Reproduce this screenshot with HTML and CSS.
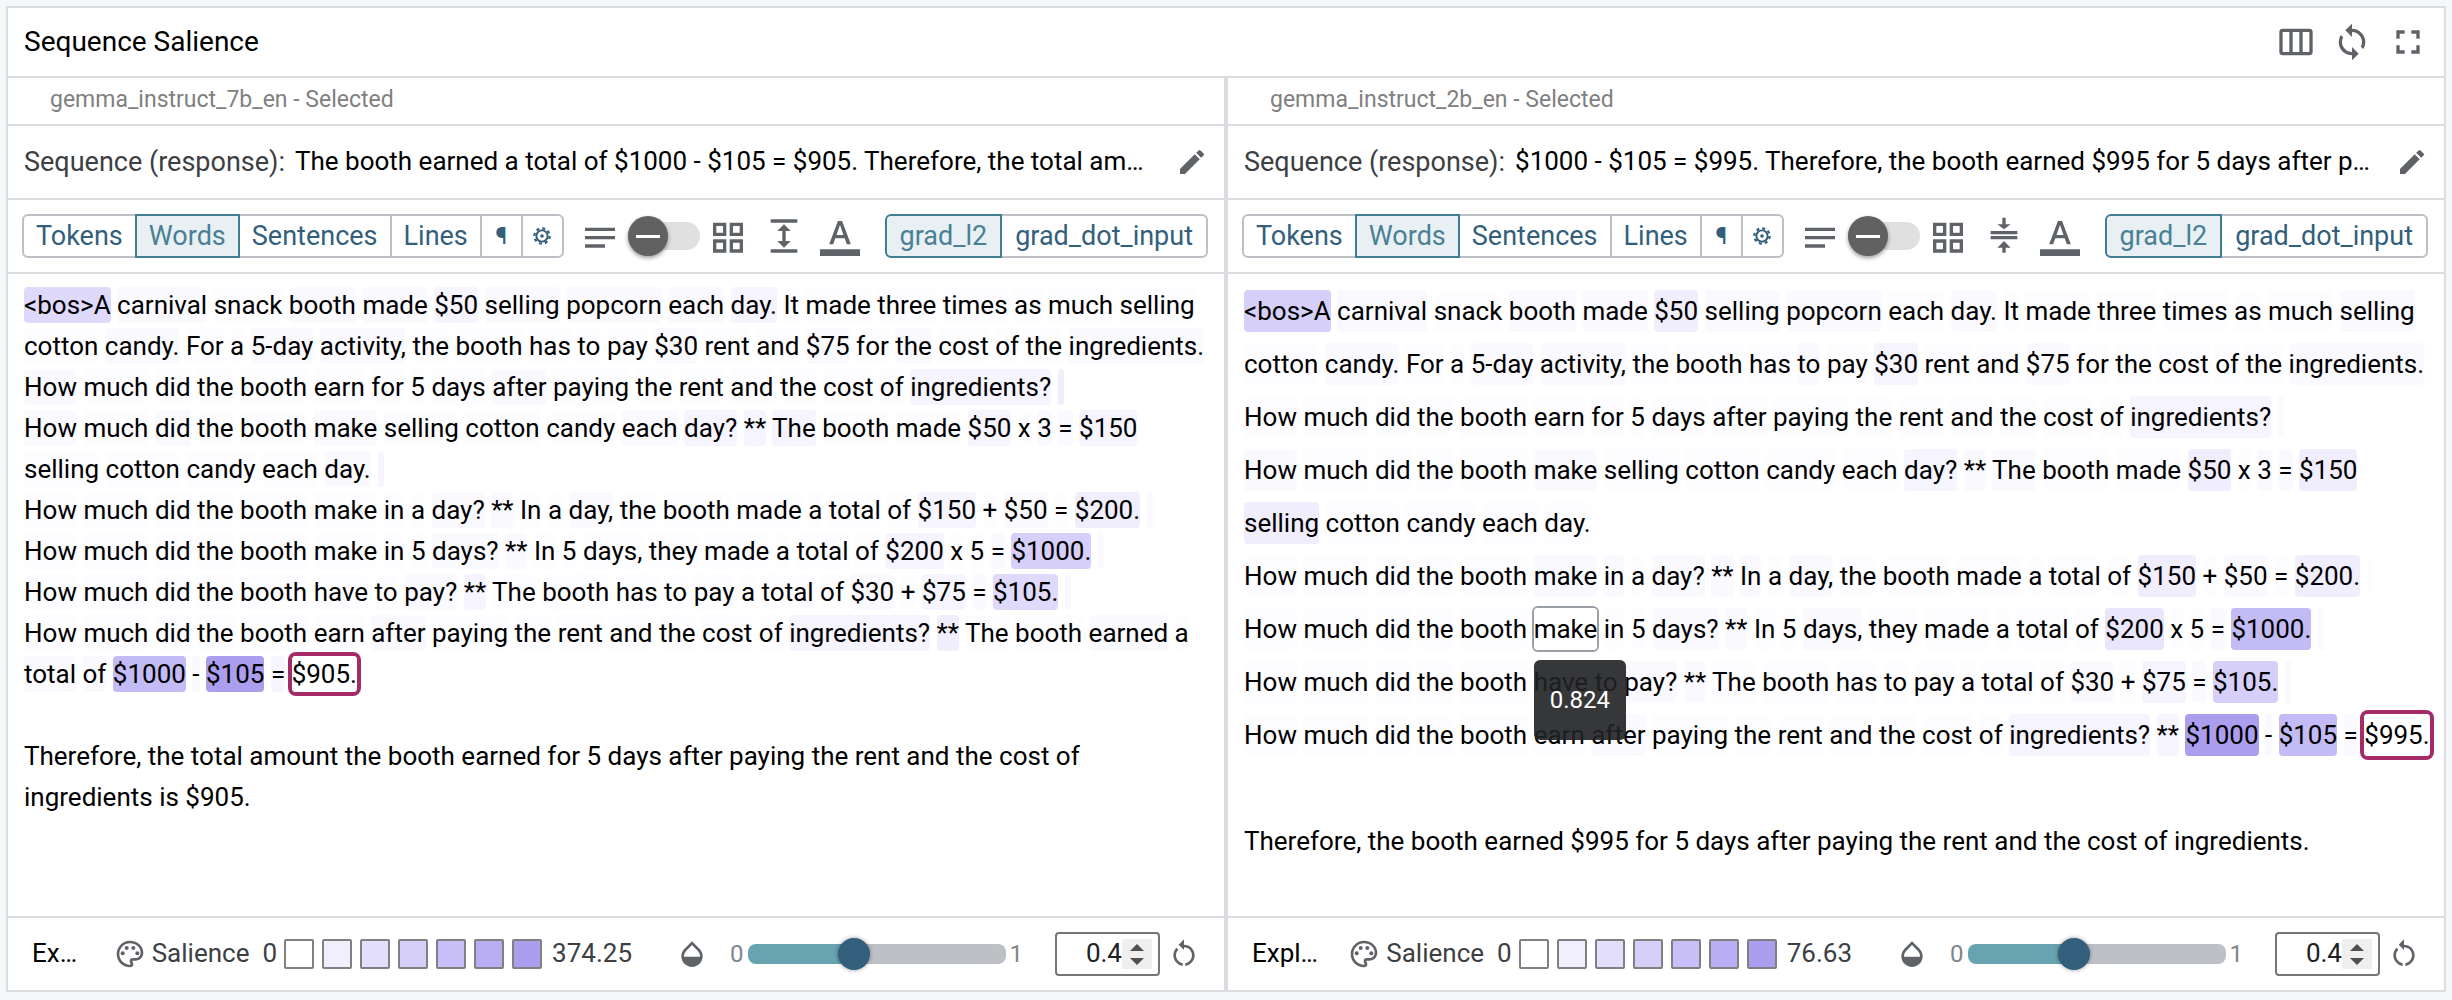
FILE: index.html
```html
<!DOCTYPE html>
<html lang="en">
<head>
<meta charset="utf-8">
<title>Sequence Salience</title>
<link rel="stylesheet" href="styles.css">
</head>
<body>
<svg class="sprite" aria-hidden="true">
  <symbol id="columns" viewBox="0 0 24 24"><path fill-rule="evenodd" d="M4 4h16a2 2 0 0 1 2 2v12a2 2 0 0 1-2 2H4a2 2 0 0 1-2-2V6a2 2 0 0 1 2-2zM4 6v12h4V6zM10 6v12h4V6zM16 6v12h4V6z"/></symbol>
  <symbol id="sync" viewBox="0 0 24 24"><path d="M12 4V1L8 5l4 4V6c3.31 0 6 2.690 6 6 0 1.010-.25 1.970-.7 2.800l1.460 1.460A7.930 7.930 0 0 0 20 12c0-4.420-3.580-8-8-8zm0 14c-3.310 0-6-2.690-6-6 0-1.010.25-1.970.7-2.800L5.240 7.740A7.930 7.930 0 0 0 4 12c0 4.420 3.580 8 8 8v3l4-4-4-4v3z"/></symbol>
  <symbol id="fullscreen" viewBox="0 0 24 24"><path d="M7 14H5v5h5v-2H7v-3zm-2-4h2V7h3V5H5v5zm12 7h-3v2h5v-5h-2v3zM14 5v2h3v3h2V5h-5z"/></symbol>
  <symbol id="pencil" viewBox="0 0 24 24"><path d="M3 17.250V21h3.750L17.810 9.940l-3.750-3.750L3 17.250zM20.710 7.040a1 1 0 0 0 0-1.410l-2.340-2.340a1 1 0 0 0-1.410 0l-1.830 1.830 3.750 3.750 1.830-1.830z"/></symbol>
  <symbol id="notes" viewBox="0 0 24 24"><path d="M3 19h12v-2H3v2zM3 7v2h18V7H3zm0 7h18v-2H3v2z"/></symbol>
  <symbol id="grid" viewBox="0 0 24 24"><path fill-rule="evenodd" d="M3 4h8v8H3zM5 6v4h4V6zM13 4h8v8h-8zM15 6v4h4V6zM3 14h8v8H3zM5 16v4h4v-4zM13 14h8v8h-8zM15 16v4h4v-4z"/></symbol>
  <symbol id="expand" viewBox="0 0 24 24"><path d="M4 2h16v2H4zM4 20h16v2H4zM12 5l4 4h-3v6h3l-4 4-4-4h3V9H8z"/></symbol>
  <symbol id="compress" viewBox="0 0 24 24"><path d="M8 19h3v3h2v-3h3l-4-4-4 4zM16 5h-3V1h-2v4H8l4 3 4-3zM4 9h16v2H4zM4 12h16v2H4z"/></symbol>
  <symbol id="textcolor" viewBox="0 0 24 24"><path d="M0 20h24v4H0zM5.490 17h2.420l1.270-3.580h5.650L16.090 17h2.420L13.250 3h-2.500L5.490 17zm4.420-5.610 2.030-5.790h.12l2.030 5.790H9.910z"/></symbol>
  <symbol id="gear" viewBox="0 0 24 24"><g fill="none" stroke="currentColor"><circle cx="12" cy="12" r="7.500" stroke-width="2.600"/><circle cx="12" cy="12" r="10.200" stroke-width="3" stroke-dasharray="4 4.010"/></g><circle cx="12" cy="12" r="2.400"/></symbol>
  <symbol id="palette" viewBox="0 0 24 24"><path d="M12 22C6.490 22 2 17.510 2 12S6.490 2 12 2s10 4.040 10 9c0 3.310-2.690 6-6 6h-1.770c-.28 0-.5.22-.5.5 0 .12.050.23.130.33.410.47.640 1.060.640 1.670A2.500 2.500 0 0 1 12 22zm0-18c-4.410 0-8 3.590-8 8s3.590 8 8 8c.28 0 .5-.22.5-.5a.54.54 0 0 0-.14-.35c-.41-.46-.63-1.050-.63-1.650a2.500 2.500 0 0 1 2.500-2.500H16c2.210 0 4-1.790 4-4 0-3.860-3.590-7-8-7z"/><circle cx="6.500" cy="11.500" r="1.500"/><circle cx="9.500" cy="7.500" r="1.500"/><circle cx="14.500" cy="7.500" r="1.500"/><circle cx="17.500" cy="11.500" r="1.500"/></symbol>
  <symbol id="drop" viewBox="0 0 24 24"><path d="M17.660 8 12 2.350 6.340 8A8.020 8.020 0 0 0 4 13.640c0 2 .78 4.110 2.340 5.670a7.990 7.990 0 0 0 11.320 0c1.560-1.560 2.340-3.670 2.340-5.670S19.220 9.560 17.660 8zM6 14c.010-2 .62-3.270 1.760-4.400L12 5.270l4.240 4.380C17.380 10.770 17.990 12 18 14H6z"/></symbol>
  <symbol id="reset" viewBox="0 0 24 24"><path d="M12 5V1L8 5l4 4V7c3.310 0 6 2.690 6 6 0 2.970-2.170 5.430-5 5.910v2.020c3.950-.49 7-3.850 7-7.930 0-4.420-3.580-8-8-8zM6 13c0-1.650.67-3.150 1.760-4.240L6.340 7.340A8 8 0 0 0 4 13c0 4.080 3.050 7.440 7 7.930v-2.020c-2.830-.48-5-2.940-5-5.910z"/></symbol>
</svg>
<main class="module">
  <header class="titlebar">
    <h1>Sequence Salience</h1>
    <div class="actions">
      <button class="icon" aria-label="Columns"><svg><use href="#columns"/></svg></button>
      <button class="icon" aria-label="Sync"><svg><use href="#sync"/></svg></button>
      <button class="icon" aria-label="Full screen"><svg><use href="#fullscreen"/></svg></button>
    </div>
  </header>
  <div class="panels">
    <section class="panel">
      <h2 class="model">gemma_instruct_7b_en - Selected</h2>
      <div class="sequence">
        <span class="key">Sequence (response):</span>
        <span class="value">The booth earned a total of $1000 - $105 = $905. Therefore, the total am…</span>
        <button class="icon edit" aria-label="Edit"><svg><use href="#pencil"/></svg></button>
      </div>
      <div class="toolbar">
        <div class="segments">
          <button>Tokens</button><button class="on">Words</button><button>Sentences</button><button>Lines</button><button class="small">¶</button><button class="small" aria-label="Settings"><svg><use href="#gear"/></svg></button>
        </div>
        <div class="density">
          <svg class="glyph"><use href="#notes"/></svg>
          <input type="checkbox" class="switch" aria-label="Density">
          <svg class="glyph"><use href="#grid"/></svg>
        </div>
        <button class="icon" aria-label="Line spacing"><svg><use href="#expand"/></svg></button>
        <button class="icon" aria-label="Text colour"><svg><use href="#textcolor"/></svg></button>
        <div class="segments end">
          <button class="on">grad_l2</button><button>grad_dot_input</button>
        </div>
      </div>
      <div class="text compact">
        <p><mark class="l5">&lt;bos&gt;A</mark> <mark class="l1">carnival</mark> <mark>snack</mark> <mark class="l1">booth</mark> <mark class="l1">made</mark> <mark class="l2">$50</mark> <mark class="l1">selling</mark> <mark class="l1">popcorn</mark> <mark class="l1">each</mark> <mark class="l2">day.</mark> <mark>It</mark> <mark>made</mark> <mark>three</mark> <mark>times</mark> <mark>as</mark> <mark>much</mark> <mark>selling</mark> <mark>cotton</mark> <mark class="l1">candy.</mark> <mark>For</mark> <mark>a</mark> <mark class="l1">5-day</mark> <mark class="l1">activity,</mark> <mark>the</mark> <mark>booth</mark> <mark>has</mark> <mark>to</mark> <mark>pay</mark> <mark class="l1">$30</mark> <mark>rent</mark> <mark>and</mark> <mark class="l1">$75</mark> <mark>for</mark> <mark class="l1">the</mark> <mark>cost</mark> <mark>of</mark> <mark>the</mark> <mark class="l1">ingredients.</mark></p>
        <p><mark class="l1">How</mark> <mark>much</mark> <mark>did</mark> <mark>the</mark> <mark>booth</mark> <mark>earn</mark> <mark>for</mark> <mark>5</mark> <mark>days</mark> <mark class="l1">after</mark> <mark>paying</mark> <mark>the</mark> <mark>rent</mark> <mark>and</mark> <mark>the</mark> <mark>cost</mark> <mark>of</mark> <mark class="l2">ingredients?</mark> <mark class="l3 tail"></mark></p>
        <p><mark class="l1">How</mark> <mark>much</mark> <mark class="l1">did</mark> <mark>the</mark> <mark>booth</mark> <mark class="l1">make</mark> <mark>selling</mark> <mark>cotton</mark> <mark>candy</mark> <mark class="l1">each</mark> <mark class="l2">day?</mark> <mark class="l2">**</mark> <mark class="l2">The</mark> <mark>booth</mark> <mark>made</mark> <mark class="l2">$50</mark> <mark>x</mark> <mark class="l1">3</mark> <mark class="l1">=</mark> <mark class="l2">$150</mark> <mark>selling</mark> <mark>cotton</mark> <mark>candy</mark> <mark>each</mark> <mark class="l1">day.</mark> <mark class="l2 tail"></mark></p>
        <p><mark>How</mark> <mark>much</mark> <mark>did</mark> <mark>the</mark> <mark>booth</mark> <mark>make</mark> <mark>in</mark> <mark>a</mark> <mark class="l1">day?</mark> <mark class="l1">**</mark> <mark>In</mark> <mark>a</mark> <mark class="l1">day,</mark> <mark>the</mark> <mark>booth</mark> <mark>made</mark> <mark>a</mark> <mark>total</mark> <mark>of</mark> <mark class="l2">$150</mark> <mark>+</mark> <mark class="l1">$50</mark> <mark>=</mark> <mark class="l3">$200.</mark> <mark class="l1 tail"></mark></p>
        <p><mark>How</mark> <mark>much</mark> <mark>did</mark> <mark>the</mark> <mark>booth</mark> <mark>make</mark> <mark>in</mark> <mark>5</mark> <mark class="l1">days?</mark> <mark class="l1">**</mark> <mark>In</mark> <mark>5</mark> <mark>days,</mark> <mark>they</mark> <mark>made</mark> <mark>a</mark> <mark>total</mark> <mark>of</mark> <mark class="l2">$200</mark> <mark>x</mark> <mark>5</mark> <mark class="l1">=</mark> <mark class="l6">$1000.</mark> <mark class="l1 tail"></mark></p>
        <p><mark>How</mark> <mark>much</mark> <mark>did</mark> <mark>the</mark> <mark>booth</mark> <mark>have</mark> <mark>to</mark> <mark class="l1">pay?</mark> <mark class="l2">**</mark> <mark>The</mark> <mark>booth</mark> <mark>has</mark> <mark>to</mark> <mark>pay</mark> <mark>a</mark> <mark>total</mark> <mark>of</mark> <mark class="l1">$30</mark> <mark>+</mark> <mark class="l2">$75</mark> <mark class="l1">=</mark> <mark class="l5">$105.</mark> <mark class="l1 tail"></mark></p>
        <p><mark>How</mark> <mark>much</mark> <mark>did</mark> <mark>the</mark> <mark>booth</mark> <mark>earn</mark> <mark class="l1">after</mark> <mark>paying</mark> <mark>the</mark> <mark>rent</mark> <mark>and</mark> <mark>the</mark> <mark>cost</mark> <mark>of</mark> <mark class="l2">ingredients?</mark> <mark class="l3">**</mark> <mark>The</mark> <mark>booth</mark> <mark class="l1">earned</mark> <mark>a</mark> <mark class="l1">total</mark> <mark class="l1">of</mark> <mark class="l7">$1000</mark> <mark class="l1">-</mark> <mark class="l8">$105</mark> <mark class="l2">=</mark> <mark class="target">$905.</mark></p>
        <p class="after">Therefore, the total amount the booth earned for 5 days after paying the rent and the cost of ingredients is $905.</p>
      </div>
      <footer class="controls">
        <span class="name">Ex…</span>
        <div class="legend">
          <svg><use href="#palette"/></svg>
          <span>Salience</span>
          <span class="min">0</span>
          <ol class="swatches"><li class="s0"></li><li class="s1"></li><li class="s2"></li><li class="s3"></li><li class="s4"></li><li class="s5"></li><li class="s6"></li></ol>
          <span>374.25</span>
        </div>
        <div class="range">
          <svg><use href="#drop"/></svg>
          <span class="bound low">0</span>
          <input type="range" min="0" max="1" step="0.1" value="0.4" aria-label="Gamma">
          <span class="bound">1</span>
          <span class="number"><input type="number" step="0.1" value="0.4" aria-label="Gamma value"><span class="spin"><i class="up"></i><i class="down"></i></span></span>
          <button class="reset" aria-label="Reset"><svg><use href="#reset"/></svg></button>
        </div>
      </footer>
    </section>
    <section class="panel">
      <h2 class="model">gemma_instruct_2b_en - Selected</h2>
      <div class="sequence">
        <span class="key">Sequence (response):</span>
        <span class="value">$1000 - $105 = $995. Therefore, the booth earned $995 for 5 days after p…</span>
        <button class="icon edit" aria-label="Edit"><svg><use href="#pencil"/></svg></button>
      </div>
      <div class="toolbar">
        <div class="segments">
          <button>Tokens</button><button class="on">Words</button><button>Sentences</button><button>Lines</button><button class="small">¶</button><button class="small" aria-label="Settings"><svg><use href="#gear"/></svg></button>
        </div>
        <div class="density">
          <svg class="glyph"><use href="#notes"/></svg>
          <input type="checkbox" class="switch" aria-label="Density">
          <svg class="glyph"><use href="#grid"/></svg>
        </div>
        <button class="icon" aria-label="Line spacing"><svg><use href="#compress"/></svg></button>
        <button class="icon" aria-label="Text colour"><svg><use href="#textcolor"/></svg></button>
        <div class="segments end">
          <button class="on">grad_l2</button><button>grad_dot_input</button>
        </div>
      </div>
      <div class="text roomy">
        <p><mark class="l6">&lt;bos&gt;A</mark> <mark class="l1">carnival</mark> <mark>snack</mark> <mark class="l1">booth</mark> <mark class="l1">made</mark> <mark class="l3">$50</mark> <mark class="l1">selling</mark> <mark class="l1">popcorn</mark> <mark>each</mark> <mark class="l1">day.</mark> <mark>It</mark> <mark>made</mark> <mark>three</mark> <mark>times</mark> <mark>as</mark> <mark>much</mark> <mark class="l1">selling</mark> <mark>cotton</mark> <mark class="l1">candy.</mark> <mark>For</mark> <mark>a</mark> <mark class="l1">5-day</mark> <mark class="l1">activity,</mark> <mark>the</mark> <mark>booth</mark> <mark>has</mark> <mark class="l1">to</mark> <mark>pay</mark> <mark class="l2">$30</mark> <mark>rent</mark> <mark>and</mark> <mark class="l1">$75</mark> <mark>for</mark> <mark>the</mark> <mark>cost</mark> <mark>of</mark> <mark>the</mark> <mark class="l1">ingredients.</mark></p>
        <p><mark>How</mark> <mark>much</mark> <mark>did</mark> <mark>the</mark> <mark>booth</mark> <mark>earn</mark> <mark>for</mark> <mark>5</mark> <mark>days</mark> <mark>after</mark> <mark>paying</mark> <mark>the</mark> <mark>rent</mark> <mark>and</mark> <mark>the</mark> <mark>cost</mark> <mark>of</mark> <mark class="l2">ingredients?</mark> <mark class="l1 tail"></mark></p>
        <p><mark class="l1">How</mark> <mark>much</mark> <mark>did</mark> <mark>the</mark> <mark>booth</mark> <mark class="l1">make</mark> <mark>selling</mark> <mark>cotton</mark> <mark>candy</mark> <mark>each</mark> <mark class="l2">day?</mark> <mark class="l1">**</mark> <mark class="l1">The</mark> <mark>booth</mark> <mark>made</mark> <mark class="l3">$50</mark> <mark>x</mark> <mark class="l1">3</mark> <mark class="l1">=</mark> <mark class="l3">$150</mark> <mark class="l3">selling</mark> <mark>cotton</mark> <mark>candy</mark> <mark>each</mark> <mark>day.</mark></p>
        <p><mark>How</mark> <mark>much</mark> <mark>did</mark> <mark>the</mark> <mark>booth</mark> <mark class="l1">make</mark> <mark class="l1">in</mark> <mark>a</mark> <mark class="l1">day?</mark> <mark class="l1">**</mark> <mark class="l1">In</mark> <mark>a</mark> <mark class="l1">day,</mark> <mark>the</mark> <mark>booth</mark> <mark>made</mark> <mark>a</mark> <mark>total</mark> <mark>of</mark> <mark class="l3">$150</mark> <mark>+</mark> <mark class="l1">$50</mark> <mark>=</mark> <mark class="l3">$200.</mark> <mark class="tail"></mark></p>
        <p><mark>How</mark> <mark>much</mark> <mark>did</mark> <mark>the</mark> <mark>booth</mark> <mark class="hovered">make<span class="tooltip" role="tooltip">0.824</span></mark> <mark>in</mark> <mark>5</mark> <mark class="l1">days?</mark> <mark class="l1">**</mark> <mark>In</mark> <mark>5</mark> <mark class="l1">days,</mark> <mark>they</mark> <mark>made</mark> <mark>a</mark> <mark>total</mark> <mark>of</mark> <mark class="l4">$200</mark> <mark>x</mark> <mark>5</mark> <mark class="l1">=</mark> <mark class="l7">$1000.</mark> <mark class="l1 tail"></mark></p>
        <p><mark>How</mark> <mark>much</mark> <mark>did</mark> <mark>the</mark> <mark>booth</mark> <mark class="l1">have</mark> <mark>to</mark> <mark class="l1">pay?</mark> <mark class="l1">**</mark> <mark>The</mark> <mark>booth</mark> <mark>has</mark> <mark>to</mark> <mark>pay</mark> <mark>a</mark> <mark>total</mark> <mark>of</mark> <mark class="l1">$30</mark> <mark>+</mark> <mark class="l2">$75</mark> <mark class="l1">=</mark> <mark class="l6">$105.</mark> <mark class="l1 tail"></mark></p>
        <p><mark>How</mark> <mark>much</mark> <mark>did</mark> <mark>the</mark> <mark>booth</mark> <mark>earn</mark> <mark class="l1">after</mark> <mark>paying</mark> <mark>the</mark> <mark>rent</mark> <mark>and</mark> <mark>the</mark> <mark>cost</mark> <mark>of</mark> <mark class="l2">ingredients?</mark> <mark class="l2">**</mark> <mark class="l8">$1000</mark> <mark class="l1">-</mark> <mark class="l7">$105</mark> <mark class="l1">=</mark> <mark class="target">$995.</mark></p>
        <p class="after">Therefore, the booth earned $995 for 5 days after paying the rent and the cost of ingredients.</p>
      </div>
      <footer class="controls">
        <span class="name">Expl…</span>
        <div class="legend">
          <svg><use href="#palette"/></svg>
          <span>Salience</span>
          <span class="min">0</span>
          <ol class="swatches"><li class="s0"></li><li class="s1"></li><li class="s2"></li><li class="s3"></li><li class="s4"></li><li class="s5"></li><li class="s6"></li></ol>
          <span>76.63</span>
        </div>
        <div class="range">
          <svg><use href="#drop"/></svg>
          <span class="bound low">0</span>
          <input type="range" min="0" max="1" step="0.1" value="0.4" aria-label="Gamma">
          <span class="bound">1</span>
          <span class="number"><input type="number" step="0.1" value="0.4" aria-label="Gamma value"><span class="spin"><i class="up"></i><i class="down"></i></span></span>
          <button class="reset" aria-label="Reset"><svg><use href="#reset"/></svg></button>
        </div>
      </footer>
    </section>
  </div>
</main>
</body>
</html>
```
FILE: styles.css
```css
* { box-sizing: border-box; }

body {
  margin: 0;
  min-height: 100vh;
  padding: 6px 6px 8px;
  display: flex;
  background: #f4f8f9;
  color: #000;
  font: 26px/1.2 Roboto, sans-serif;
}

h1, h2, p, ol { margin: 0; padding: 0; font-weight: 400; }
button { margin: 0; padding: 0; border: 0; background: none; font: inherit; color: inherit; }
svg { display: block; fill: currentColor; flex: none; }
.sprite { position: absolute; width: 0; height: 0; }

.module {
  flex: 1;
  min-width: 0;
  display: flex;
  flex-direction: column;
  border: 2px solid #dadce0;
  background: #fff;
}

.titlebar {
  height: 70px;
  padding: 0 16px;
  display: flex;
  align-items: center;
  justify-content: space-between;
  border-bottom: 2px solid #dadce0;
}
h1 { font-size: 28px; }
.actions { display: flex; gap: 16px; }
.icon { color: #5f6368; flex: none; }
.icon svg, .glyph { width: 40px; height: 40px; color: #5f6368; }

.panels { flex: 1; display: grid; grid-template-columns: 1fr 1fr; gap: 4px; background: #dadce0; }
.panel { min-width: 0; display: flex; flex-direction: column; background: #fff; }

.model {
  height: 48px;
  padding: 0 42px;
  border-bottom: 2px solid #dadce0;
  font-size: 23px;
  line-height: 44px;
  color: #808080;
}

.sequence {
  height: 74px;
  padding: 0 16px;
  display: flex;
  align-items: center;
  gap: 10px;
  border-bottom: 2px solid #dadce0;
  white-space: nowrap;
}
.key { font-size: 27px; color: #3c4043; }
.value { flex: 1; min-width: 0; overflow: hidden; text-overflow: ellipsis; }
.icon.edit svg { width: 32px; height: 32px; }

.toolbar {
  height: 74px;
  padding: 0 16px 0 14px;
  display: flex;
  align-items: center;
  gap: 16px;
  border-bottom: 2px solid #dadce0;
}
.segments { display: flex; height: 44px; font-size: 27px; color: #335f7c; }
.segments button {
  display: flex;
  align-items: center;
  padding: 0 12px;
  border: 2px solid #bdc1c6;
}
.segments button + button { margin-left: -2px; }
.segments button:first-child { border-radius: 6px 0 0 6px; }
.segments button:last-child { border-radius: 0 6px 6px 0; }
.segments .on { position: relative; background: #e8f0f3; border-color: #427e93; color: #4a7f95; }
.segments .small { width: 43px; justify-content: center; font-size: 24px; }
.segments .small svg { width: 18px; height: 18px; }
.end { margin-left: auto; }
.end button { padding: 0 13px; }

.density { display: flex; align-items: center; gap: 8px; }
.switch {
  appearance: none;
  width: 72px;
  height: 28px;
  margin: 0;
  display: flex;
  align-items: center;
  border-radius: 14px;
  background: #e0e0e0;
}
.switch::before {
  content: "";
  width: 40px;
  height: 40px;
  flex: none;
  border-radius: 50%;
  background: linear-gradient(#fff, #fff) center / 24px 3px no-repeat #616161;
  box-shadow: 0 2px 4px rgba(0, 0, 0, .4);
}

.text { flex: 1; padding: 11px 12px 11px 16px; }
.compact { line-height: 41px; }
.roomy { line-height: 53px; }
mark { padding: 3px 0; border-radius: 4px; background: #fdfdff; color: inherit; }
.roomy mark { padding: 6px 0; }
.compact .after { margin-top: 41px; }
.roomy .after { margin-top: 53px; }
.l1 { background: #faf9fe; }
.l2 { background: #f6f4fe; }
.l3 { background: #f0edfd; }
.l4 { background: #e9e5fb; }
.l5 { background: #dfdafb; }
.l6 { background: #d6cffa; }
.l7 { background: #c3bbf6; }
.l8 { background: #ab9eef; }
.text .tail { margin-left: 7px; padding-left: 3px; padding-right: 3px; }
.text .target { background: #fff; box-shadow: 0 0 0 4px #a52a68; }
.text .hovered { position: relative; background: #fff; box-shadow: 0 0 0 2px #9aa0a6; }
.tooltip {
  position: absolute;
  top: 100%;
  left: 0;
  margin-top: 10px;
  padding: 0 16px;
  border-radius: 6px;
  background: rgba(32, 33, 36, .9);
  color: #fff;
  font-size: 24px;
  line-height: 80px;
}

.controls {
  height: 74px;
  padding: 0 24px;
  display: flex;
  align-items: center;
  border-top: 2px solid #dadce0;
}
.name { flex: 1; white-space: nowrap; }
.legend { display: flex; align-items: center; gap: 6px; color: #3c4043; }
.legend svg { width: 32px; height: 32px; color: #5f6368; }
.min { margin-left: 7px; }
.swatches { display: flex; gap: 8px; margin: 0 4px 0 1px; list-style: none; }
.swatches li { width: 30px; height: 30px; border: 2px solid #808080; border-radius: 2px; }
.s1 { background: #f1eefd; }
.s2 { background: #e3defc; }
.s3 { background: #d6cffa; }
.s4 { background: #c8bff8; }
.s5 { background: #b9aef4; }
.s6 { background: #ab9eef; }

.range { margin-left: 44px; display: flex; align-items: center; color: #5f6368; }
.range > svg, .reset svg { width: 32px; height: 32px; }
.bound { font-size: 24px; color: #80868b; }
.low { margin-left: 22px; }
input[type="range"] {
  appearance: none;
  width: 258px;
  height: 20px;
  margin: 0 4px;
  border-radius: 8px;
  background: linear-gradient(90deg, #68a3b0 41%, #bdc1c6 41%);
}
input[type="range"]::-webkit-slider-thumb {
  appearance: none;
  width: 32px;
  height: 32px;
  border-radius: 50%;
  background: #335f7c;
  box-shadow: 0 0 4px rgba(0, 0, 0, .4);
}
.number {
  width: 105px;
  height: 44px;
  margin: 0 8px 0 32px;
  padding-right: 6px;
  display: flex;
  align-items: center;
  justify-content: flex-end;
  border: 2px solid #767676;
  border-radius: 4px;
}
.number input {
  appearance: textfield;
  width: 60px;
  padding: 0;
  border: 0;
  background: none;
  font: inherit;
  text-align: right;
  color: #202124;
}
.number input::-webkit-inner-spin-button { appearance: none; margin: 0; }
.spin {
  width: 30px;
  height: 30px;
  display: flex;
  flex-direction: column;
  align-items: center;
  justify-content: center;
  gap: 7px;
  background: #efefef;
}
.spin i { width: 0; height: 0; border: 7px solid transparent; }
.spin .up { border-top: 0; border-bottom-color: #505050; }
.spin .down { border-bottom: 0; border-top-color: #505050; }
```
